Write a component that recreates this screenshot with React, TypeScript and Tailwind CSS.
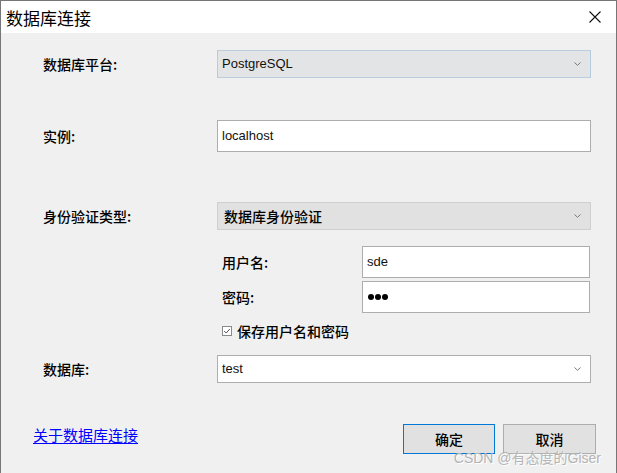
import React from "react";

const cjk = { fontFamily: '"Noto Sans CJK SC", "Microsoft YaHei", sans-serif' };
const latin = { fontFamily: '"Liberation Sans", "Noto Sans CJK SC", sans-serif' };

function Chevron() {
  return (
    <svg width="7" height="4" viewBox="0 0 7 4" className="shrink-0">
      <path d="M0.5 0.5 L3.5 3.3 L6.5 0.5" fill="none" stroke="#7a7a7a" strokeWidth="1" />
    </svg>
  );
}

function Label({ children }: { children: React.ReactNode }) {
  return (
    <div className="text-[14px] font-medium leading-none text-black" style={cjk}>
      {children}
    </div>
  );
}

export default function App() {
  return (
    <div className="flex h-[473px] w-[617px] flex-col overflow-hidden border-x border-t border-[#767676] bg-[#f0f0f0]">
      {/* title bar */}
      <div className="flex h-[32px] shrink-0 items-center justify-between bg-white pl-[5px] pr-[15px]">
        <span className="text-[17px] leading-none text-black" style={cjk}>
          数据库连接
        </span>
        <svg width="12" height="12" viewBox="0 0 12 12">
          <path d="M0.5 0.5 L11.5 11.5 M11.5 0.5 L0.5 11.5" stroke="#111" strokeWidth="1.1" />
        </svg>
      </div>

      <div className="relative flex-1 pt-[17px]">
        <div className="ml-[42px] w-[548px]">
          {/* platform */}
          <div className="grid grid-cols-[174px_374px] items-center">
            <Label>数据库平台:</Label>
            <div className="flex h-[28px] items-center justify-between border border-[#b9cde2] bg-[#e3e4e6] pl-[4px] pr-[9px]">
              <span className="text-[13px] text-[#111]" style={latin}>PostgreSQL</span>
              <Chevron />
            </div>
          </div>

          {/* instance */}
          <div className="mt-[42px] grid grid-cols-[174px_374px] items-center">
            <Label>实例:</Label>
            <div className="flex h-[32px] items-center border border-[#adadad] bg-white pl-[4px]">
              <span className="text-[13px] text-[#111]" style={latin}>localhost</span>
            </div>
          </div>

          {/* auth type */}
          <div className="mt-[50px] grid grid-cols-[174px_374px] items-center">
            <Label>身份验证类型:</Label>
            <div className="flex h-[28px] items-center justify-between border border-[#cfcfcf] bg-[#e1e1e1] pl-[6px] pr-[9px]">
              <span className="text-[14px] font-medium leading-none text-black" style={cjk}>数据库身份验证</span>
              <Chevron />
            </div>
          </div>

          <div className="ml-[179px] mt-[16px] w-[369px]">
            <div className="grid grid-cols-[140px_228px] items-center">
              <Label>用户名:</Label>
              <div className="flex h-[32px] items-center border border-[#adadad] bg-white pl-[4px]">
                <span className="text-[13px] text-[#111]" style={latin}>sde</span>
              </div>
            </div>
            <div className="mt-[3px] grid grid-cols-[140px_228px] items-center">
              <Label>密码:</Label>
              <div className="flex h-[32px] items-center gap-[1px] border border-[#adadad] bg-white pl-[5px]">
                <span className="h-[6px] w-[6px] rounded-full bg-black" />
                <span className="h-[6px] w-[6px] rounded-full bg-black" />
                <span className="h-[6px] w-[6px] rounded-full bg-black" />
              </div>
            </div>
            <div className="flex h-[36px] items-center gap-[5px]">
              <svg width="10" height="10" viewBox="0 0 10 10" className="shrink-0">
                <rect x="0.5" y="0.5" width="9" height="9" fill="#fff" stroke="#8a8a8a" />
                <path d="M2.2 5 L4.2 7 L7.8 3" fill="none" stroke="#555" strokeWidth="1" />
              </svg>
              <Label>保存用户名和密码</Label>
            </div>
          </div>

          {/* database */}
          <div className="mt-[6px] grid grid-cols-[174px_374px] items-center">
            <Label>数据库:</Label>
            <div className="flex h-[28px] items-center justify-between border border-[#adadad] bg-white pl-[4px] pr-[9px]">
              <span className="text-[13px] text-[#111]" style={latin}>test</span>
              <Chevron />
            </div>
          </div>
        </div>

        {/* footer */}
        <div className="mt-[41px] flex items-start justify-between pl-[32px] pr-[20px]">
          <a className="pt-[3px] text-[15px] leading-none text-[#0000ff] underline underline-offset-2" style={cjk}>
            关于数据库连接
          </a>
          <div className="flex gap-[8px]">
            <button className="h-[30px] w-[92px] border border-[#0078d7] bg-[#e1e1e1] text-[14px] font-medium text-black" style={cjk}>
              确定
            </button>
            <button className="h-[30px] w-[93px] border border-[#adadad] bg-[#e1e1e1] text-[14px] font-medium text-black" style={cjk}>
              取消
            </button>
          </div>
        </div>

        {/* watermark */}
        <div
          className="absolute bottom-[8px] right-[15px] text-[14px] leading-none text-[#b4b4b4] [text-shadow:1px_1px_0_#fff]"
          style={latin}
        >
          CSDN @有态度的Giser
        </div>
      </div>
    </div>
  );
}
